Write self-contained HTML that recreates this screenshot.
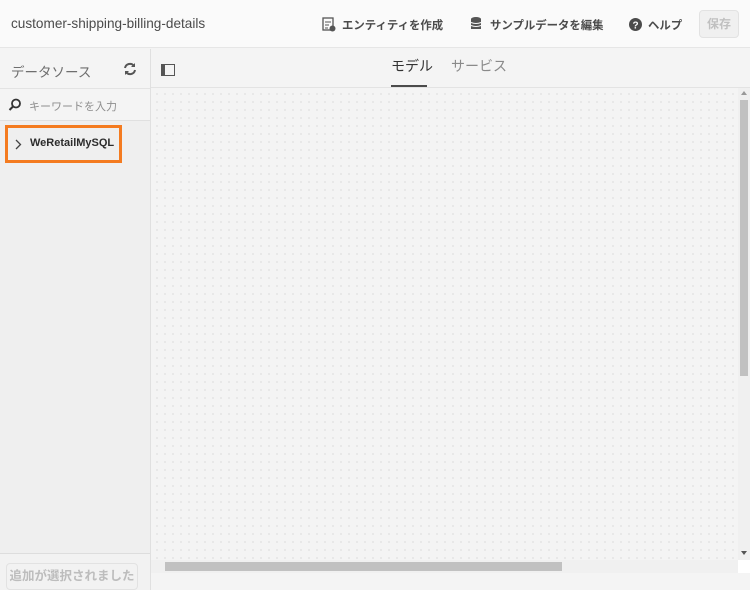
<!DOCTYPE html><html><head><meta charset="utf-8"><style>
*{box-sizing:border-box;margin:0;padding:0}
body{width:750px;height:590px;overflow:hidden;background:#f4f4f4;font-family:"Liberation Sans","Noto Sans CJK JP",sans-serif;position:relative;color:#323232}
.hdr{position:absolute;left:0;top:0;width:750px;height:48px;background:#fafafa;border-bottom:1px solid #e6e6e6}
.t{position:absolute;left:11px;top:16px;font-size:13.6px;color:#4b4b4b}
.hb{position:absolute;top:17px;font-size:11.4px;font-weight:bold;color:#4b4b4b}
.save{position:absolute;left:699px;top:10px;width:40px;height:28px;border:1px solid #e2e2e2;border-radius:4px;background:#f0f0f0;color:#c0c0c0;font-size:12px;font-weight:bold;text-align:center;line-height:26px}
.left{position:absolute;left:0;top:49px;width:151px;height:541px;background:#efefef;border-right:1px solid #e0e0e0}
.lh{height:40px;border-bottom:1px solid #e3e3e3;padding:12px 11px;font-size:13.5px;color:#6e6e6e;position:relative;background:#f4f4f4}
.sr{height:32px;border-bottom:1px solid #e0e0e0;padding:9px 0 0 29px;font-size:11px;color:#8e8e8e;position:relative;background:#f4f4f4}
.item{position:absolute;left:5px;top:76px;width:117px;height:38px;border:3px solid #f47b20;font-size:11px;font-weight:bold;padding:9px 0 0 22px;color:#2c2c2c}
.bot{position:absolute;left:0;top:504px;width:150px;height:37px;border-top:1px solid #ddd;background:#f2f2f2}
.btn{position:absolute;left:6px;top:9px;width:132px;height:27px;border:1px solid #e2e2e2;border-radius:4px;color:#bdbdbd;font-size:12.5px;font-weight:bold;text-align:center;line-height:25px}
.tb{position:absolute;left:151px;top:49px;width:599px;height:39px;background:#f4f4f4;border-bottom:1px solid #e3e3e3}
.tab{position:absolute;top:7px;font-size:14px}
.cv{position:absolute;left:151px;top:88px;width:587px;height:472px;background-color:#f4f4f4;background-image:radial-gradient(circle,#c8c8c8 0.5px,transparent 0.8px);background-size:8px 8px;background-position:2px 2px}
.vs{position:absolute;left:738px;top:88px;width:12px;height:472px;background:#f0f0f0}
.hs{position:absolute;left:151px;top:560px;width:587px;height:13px;background:#f0f0f0}
</style></head><body>
<div class="hdr"><div class="t">customer-shipping-billing-details</div>
<svg style="position:absolute;left:322px;top:17px" width="14" height="15" viewBox="0 0 14 15"><rect x="1" y="1" width="10" height="12" fill="none" stroke="#555" stroke-width="1.3"/><path d="M3 5h6M3 8h4M3 11h3" stroke="#555"/><circle cx="10.5" cy="11.5" r="3" fill="#555"/></svg>
<div class="hb" style="left:342px">エンティティを作成</div>
<svg style="position:absolute;left:470px;top:16px" width="14" height="15" viewBox="0 0 14 15"><ellipse cx="6" cy="3" rx="5" ry="2" fill="#555"/><rect x="1" y="3" width="10" height="10" fill="#555"/><path d="M1 6.5q5 2 10 0M1 9.5q5 2 10 0" stroke="#fafafa" fill="none"/></svg>
<div class="hb" style="left:490px">サンプルデータを編集</div>
<svg style="position:absolute;left:629px;top:18px" width="13" height="13"><circle cx="6.5" cy="6.5" r="6.5" fill="#4b4b4b"/><text x="6.5" y="10.5" font-size="10" font-weight="bold" fill="#fff" text-anchor="middle" font-family="Liberation Sans">?</text></svg>
<div class="hb" style="left:648px">ヘルプ</div>
<div class="save">保存</div></div>
<div class="left">
<div class="lh">データソース<svg style="position:absolute;left:123px;top:13px" width="14" height="14" viewBox="0 0 14 14"><path d="M2 6A5 5 0 0 1 11 4M12 8A5 5 0 0 1 3 10" stroke="#555" stroke-width="2" fill="none"/><path d="M12 1v4H8zM2 13V9h4z" fill="#555"/></svg></div>
<div class="sr"><svg style="position:absolute;left:8px;top:9px" width="14" height="14"><circle cx="8" cy="5.5" r="4" stroke="#333" stroke-width="1.8" fill="none"/><path d="M5 8.5L1.5 12" stroke="#333" stroke-width="2"/></svg>キーワードを入力</div>
<div class="item"><svg style="position:absolute;left:7px;top:11px" width="7" height="11"><path d="M1 1l4.5 4.5L1 10" stroke="#444" stroke-width="1.3" fill="none"/></svg>WeRetailMySQL</div>
<div class="bot"><div class="btn">追加が選択されました</div></div>
</div>
<div class="tb"><svg style="position:absolute;left:10px;top:15px" width="14" height="12"><rect x="0.5" y="0.5" width="13" height="11" fill="none" stroke="#555"/><rect x="1" y="1" width="3" height="10" fill="#555"/></svg>
<div class="tab" style="left:240px;color:#323232">モデル</div><div style="position:absolute;left:240px;top:36px;width:36px;height:2px;background:#4b4b4b"></div>
<div class="tab" style="left:300px;color:#8a8a8a">サービス</div></div>
<div class="cv"></div>
<div class="vs"><div style="position:absolute;left:2px;top:12px;width:8px;height:276px;background:#c1c1c1"></div><div style="position:absolute;left:3px;top:3px;border:3px solid transparent;border-bottom:4px solid #999;border-top:0"></div><div style="position:absolute;left:3px;top:463px;border:3px solid transparent;border-top:4px solid #555;border-bottom:0"></div></div>
<div class="hs"><div style="position:absolute;left:14px;top:2px;width:397px;height:9px;background:#c1c1c1"></div></div>
<div style="position:absolute;left:738px;top:560px;width:12px;height:13px;background:#fff"></div>
</body></html>
